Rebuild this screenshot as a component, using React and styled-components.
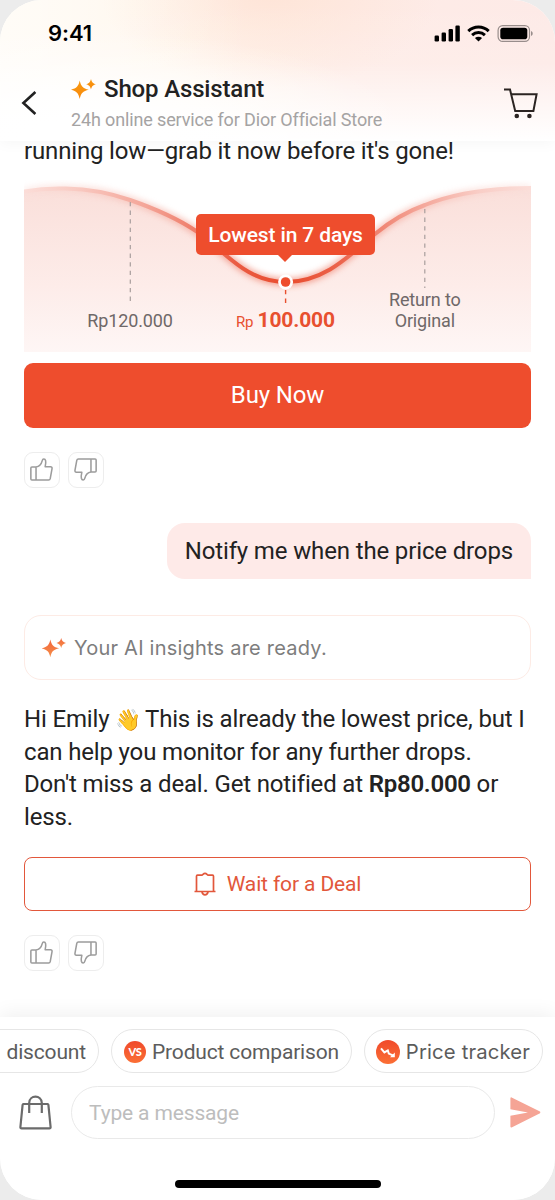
import React from "react";
import styled, { createGlobalStyle } from "styled-components";

const GlobalStyle = createGlobalStyle`
    * {
        box-sizing: border-box;
    }

    body {
        margin: 0;
        background: #ececec;
        font-family: Roboto, "Liberation Sans", sans-serif;
        color: #222;
    }

    svg {
        display: block;
        flex-shrink: 0;
    }
`

const Phone = styled.div`
    width: 555px;
    height: 1200px;
    display: flex;
    flex-direction: column;
    background: #fff;
    border-radius: 42px;
    overflow: hidden;
`

const Header = styled.header`
    height: 141px;
    flex-shrink: 0;
    position: relative;
    z-index: 2;
    background:
        radial-gradient(ellipse 330px 110px at 90px 141px, #fff 20%, rgba(255, 255, 255, 0) 100%),
        linear-gradient(180deg, rgba(255, 255, 255, 0) 0%, rgba(255, 255, 255, 0.1) 45%, #fff 100%),
        linear-gradient(90deg, rgba(255, 255, 255, 0.5) 0%, rgba(255, 255, 255, 0) 45%),
        radial-gradient(ellipse 170px 100px at 270px -10px, #fee4d7 0%, rgba(254, 228, 215, 0) 100%),
        linear-gradient(90deg, #fffaf0 0%, #fff5ea 35%, #feece7 62%, #fdeae7 100%);
    box-shadow: 0 2px 14px rgba(0, 0, 0, 0.04);
`

const StatusBar = styled.div`
    height: 66px;
    padding: 0 21px 0 48px;
    display: flex;
    align-items: center;
    justify-content: space-between;
`

const Clock = styled.span`
    font-family: Inter, "Liberation Sans", sans-serif;
    font-size: 22px;
    font-weight: 600;
    line-height: 26px;
    letter-spacing: -0.1px;
    color: #000;
`

const StatusIcons = styled.div`
    display: flex;
    align-items: center;
    gap: 7px;
`

const TitleBar = styled.div`
    height: 74px;
    padding: 0 17px 0 20px;
    display: flex;
    align-items: center;
`

const TitleText = styled.div`
    flex: 1;
    margin-left: 33px;
    padding-bottom: 2px;
`

const Title = styled.h1`
    margin: 0;
    display: flex;
    align-items: center;
    gap: 8px;
    font-size: 24px;
    font-weight: 500;
    line-height: 32px;
    letter-spacing: -0.15px;
`

const Subtitle = styled.p`
    margin: 4px 0 0;
    font-size: 18px;
    line-height: 22px;
    letter-spacing: -0.14px;
    color: #a5a3a3;
`

const Chat = styled.main`
    flex: 1;
    min-height: 0;
    margin-top: -6px;
    padding: 0 24px;
    display: flex;
    flex-direction: column;
`

const Message = styled.p`
    margin: 0;
    font-size: 24px;
    line-height: 32.6px;
    letter-spacing: -0.16px;
    white-space: nowrap;

    b {
        font-weight: 600;
        letter-spacing: -0.25px;
    }
`

const Emoji = styled.span`
    font-size: 21px;
    line-height: 1;
    letter-spacing: -1.5px;
`

const ChartBox = styled.div`
    position: relative;
    height: 172px;
    margin-top: 12px;
`

const Tooltip = styled.div`
    position: absolute;
    left: 172px;
    top: 34px;
    width: 179px;
    height: 41px;
    border-radius: 5px;
    background: #ee4d2d;
    color: #fff;
    font-size: 21px;
    font-weight: 500;
    line-height: 42px;
    letter-spacing: -0.13px;
    text-align: center;
    white-space: nowrap;

    &::after {
        content: "";
        position: absolute;
        left: 81px;
        top: 40px;
        border: 8px solid transparent;
        border-top-color: #ee4d2d;
        border-bottom: none;
    }
`

const ChartText = styled.text`
    font-family: Roboto, "Liberation Sans", sans-serif;
    font-size: ${({size}) => size || 18}px;
    font-weight: ${({weight}) => weight || 400};
    letter-spacing: -0.15px;
    fill: ${({accent}) => (accent ? '#e8502f' : '#6f6868')};
`

const BuyButton = styled.button`
    height: 65px;
    flex-shrink: 0;
    margin-top: 11px;
    border: none;
    border-radius: 9px;
    background: #ee4d2d;
    color: #fff;
    font-family: inherit;
    font-size: 24px;
    letter-spacing: -0.15px;
`

const Feedback = styled.div`
    display: flex;
    gap: 8px;
    margin-top: 24px;
`

const FeedbackButton = styled.button`
    width: 36px;
    height: 36px;
    padding: 0 1px 0 0;
    display: flex;
    align-items: center;
    justify-content: center;
    border: 1px solid #ededed;
    border-radius: 9px;
    background: #fff;
`

const UserBubble = styled.div`
    align-self: flex-end;
    height: 56px;
    margin-top: 35px;
    padding: 0 18px;
    border-radius: 18px 18px 0 18px;
    background: #feeae8;
    font-size: 24px;
    line-height: 56px;
    letter-spacing: -0.14px;
    white-space: nowrap;
`

const Insight = styled.div`
    height: 65px;
    flex-shrink: 0;
    margin: 36px 0 23.6px;
    padding: 1px 17px 0;
    display: flex;
    align-items: center;
    gap: 8px;
    border: 1.5px solid #fdebe5;
    border-radius: 17px;
    color: #7d7d7d;
    font-family: Inter, "Liberation Sans", sans-serif;
    font-size: 20px;
    letter-spacing: 0.22px;
`

const WaitButton = styled.button`
    height: 54px;
    flex-shrink: 0;
    margin-top: 23.4px;
    display: flex;
    align-items: center;
    justify-content: center;
    gap: 11px;
    border: 1.5px solid #e2573b;
    border-radius: 8px;
    background: #fff;
    color: #e2573b;
    font-family: inherit;
    font-size: 21px;
    letter-spacing: -0.13px;
`

const Dock = styled.footer`
    height: 183px;
    flex-shrink: 0;
    position: relative;
    background: #fff;
    box-shadow: 0 -4px 18px rgba(0, 0, 0, 0.06);
    display: flex;
    flex-direction: column;
    align-items: center;
`

const Chips = styled.div`
    width: 100%;
    margin-top: 12px;
    padding-right: 12px;
    display: flex;
    justify-content: flex-end;
    gap: 12px;
`

const Chip = styled.button`
    width: ${({width}) => width}px;
    height: 44px;
    padding: 1px 12px 0;
    flex-shrink: 0;
    display: flex;
    align-items: center;
    justify-content: flex-end;
    gap: 6px;
    border: 1px solid #e6e6e6;
    border-radius: 22px;
    background: #fff;
    color: #5c5c5c;
    font-family: ${({font}) => font || 'Roboto'}, "Liberation Sans", sans-serif;
    font-size: ${({size}) => size || 21}px;
    letter-spacing: ${({font}) => (font ? 0.14 : -0.16)}px;
    white-space: nowrap;
`

const VsBadge = styled.span`
    width: 22px;
    height: 22px;
    flex-shrink: 0;
    border-radius: 50%;
    background: linear-gradient(180deg, #f04a2b, #fb6f35);
    color: #fff;
    font-family: Lato, sans-serif;
    font-size: 11px;
    font-weight: 900;
    line-height: 22px;
    text-align: center;
`

const InputRow = styled.div`
    width: 100%;
    margin-top: 13px;
    padding: 0 14px 0 19px;
    display: flex;
    align-items: center;
`

const Input = styled.input`
    width: 424px;
    height: 53px;
    margin: 0 15px 0 19px;
    padding: 0 17px;
    border: 1.5px solid #e9e9e9;
    border-radius: 27px;
    background: #fff;
    outline: none;
    font-family: inherit;
    font-size: 21px;
    letter-spacing: -0.15px;

    &::placeholder {
        color: #bdbdbd;
        opacity: 1;
    }
`

const HomeIndicator = styled.div`
    width: 206px;
    height: 8px;
    margin-top: 41px;
    border-radius: 4px;
    background: #000;
`

const Sparkles = ({width, from, to}) => (
    <svg width={width} height={width * 0.8} viewBox="0 0 25 20">
        <defs>
            <linearGradient id={`spark-${width}`} x1="0" y1="0" x2="0" y2="1">
                <stop offset="0" stopColor={from}/>
                <stop offset="1" stopColor={to}/>
            </linearGradient>
        </defs>
        <path fill={`url(#spark-${width})`} d="M8.7 1.6 C10 7.4 11.8 9.4 17.8 10.8 C11.8 12.2 10 14.2 8.7 20 C7.4 14.2 5.6 12.2 -.2 10.8 C5.6 9.4 7.4 7.4 8.7 1.6Z"/>
        <path fill={`url(#spark-${width})`} d="M20 0 C20.8 3.2 21.8 4.4 25 5.2 C21.8 6 20.8 7.2 20 10.4 C19.2 7.2 18.2 6 15 5.2 C18.2 4.4 19.2 3.2 20 0Z"/>
    </svg>
)

const ThumbUp = ({down}) => (
    <svg width="23" height="23" viewBox="0 0 24 24" fill="none" stroke="#9c9c9c" strokeWidth="1.6" strokeLinejoin="round" transform={down ? 'rotate(180)' : undefined}>
        <path d="M6.3 9.3 H2 Q.9 9.3 .9 10.4 V21.8 Q.9 22.9 2 22.9 H19.4 Q20.8 22.9 21.1 21.6 L23 11 Q23.2 9.2 21.5 9.2 H15.8 C16.4 6.6 16.7 4.6 16.3 2.9 C15.7 .6 13.2 .6 12.8 2.7 C12 5.8 9.8 8.9 6.3 9.3 V22.9"/>
    </svg>
)

const PriceChart = () => (
    <svg width="507" height="172" viewBox="24 180 507 172">
        <defs>
            <linearGradient id="area" x1="0" y1="186" x2="0" y2="352" gradientUnits="userSpaceOnUse">
                <stop offset="0" stopColor="#fadfda"/>
                <stop offset="0.6" stopColor="#fdece9"/>
                <stop offset="1" stopColor="#fef6f5"/>
            </linearGradient>
            <linearGradient id="line" x1="24" y1="0" x2="531" y2="0" gradientUnits="userSpaceOnUse">
                <stop offset="0" stopColor="#fbddd8"/>
                <stop offset="0.1" stopColor="#f9cbc3"/>
                <stop offset="0.24" stopColor="#f4a598"/>
                <stop offset="0.42" stopColor="#ea5b42"/>
                <stop offset="0.52" stopColor="#e94c2e"/>
                <stop offset="0.62" stopColor="#eb634b"/>
                <stop offset="0.78" stopColor="#f4a598"/>
                <stop offset="0.9" stopColor="#f9cec7"/>
                <stop offset="1" stopColor="#fbddd8"/>
            </linearGradient>
            <filter id="glow" x="-5%" y="-20%" width="110%" height="140%">
                <feGaussianBlur stdDeviation="3"/>
            </filter>
        </defs>
        <path fill="url(#area)" d="M24 191.5 C38 189 52 188 66 188.5 C90 189 110 193 130 200 C156 209 178 219 196 231 C225 251 245 282 286 282 C325 282 350 255 375 234 C392 220 408 211 425 205 C455 193 490 188 531 188 V352 H24Z"/>
        <g fill="none" stroke="url(#line)">
            <path strokeWidth="7" opacity="0.55" filter="url(#glow)" d="M24 191.5 C38 189 52 188 66 188.5 C90 189 110 193 130 200 C156 209 178 219 196 231 C225 251 245 282 286 282 C325 282 350 255 375 234 C392 220 408 211 425 205 C455 193 490 188 531 188"/>
            <path strokeWidth="4" d="M24 191.5 C38 189 52 188 66 188.5 C90 189 110 193 130 200 C156 209 178 219 196 231 C225 251 245 282 286 282 C325 282 350 255 375 234 C392 220 408 211 425 205 C455 193 490 188 531 188"/>
        </g>
        <g strokeWidth="1.2" strokeDasharray="4.3 4.3" stroke="#a89e9d">
            <path d="M130.3 202 V305"/>
            <path d="M424.8 209 V288"/>
            <path stroke="#e8502f" strokeWidth="1.4" d="M285.6 290 V307"/>
        </g>
        <circle cx="285.6" cy="282" r="7.5" fill="#fff"/>
        <circle cx="285.6" cy="282" r="4.8" fill="#ee4d2d"/>
        <ChartText x="130" y="326.5" textAnchor="middle">Rp120.000</ChartText>
        <ChartText x="236" y="326.5" size="15" accent="true">Rp</ChartText>
        <ChartText x="257.5" y="326.5" size="21" weight="700" accent="true">100.000</ChartText>
        <ChartText x="424.8" y="305.5" textAnchor="middle">Return to</ChartText>
        <ChartText x="424.8" y="326.5" textAnchor="middle">Original</ChartText>
    </svg>
)

const App = () => {
    return (
        <React.Fragment>
            <GlobalStyle/>
            <Phone>
                <Header>
                    <StatusBar>
                        <Clock>9:41</Clock>
                        <StatusIcons>
                            <svg width="26" height="17" viewBox="0 0 26 17">
                                <rect x="0.6" y="10.5" width="4.4" height="6" rx="1.2"/>
                                <rect x="7.6" y="7.5" width="4.4" height="9" rx="1.2"/>
                                <rect x="14.6" y="4" width="4.4" height="12.5" rx="1.2"/>
                                <rect x="21.4" y="0.5" width="4.4" height="16" rx="1.2"/>
                            </svg>
                            <svg width="23" height="17" viewBox="0 0 23 17">
                                <path fill="none" stroke="#000" strokeWidth="3" d="M1.3 6.1 C7 .6 16 .6 21.7 6.1 M5.1 10.1 C8.7 6.7 14.3 6.7 17.9 10.1"/>
                                <path d="M7.9 12.9 C10 11.2 13 11.2 15.1 12.9 L11.5 16.6Z"/>
                            </svg>
                            <svg width="37" height="17" viewBox="0 0 37 17">
                                <rect x="1.1" y="0.6" width="31.4" height="15.8" rx="4.6" fill="none" stroke="#000" strokeOpacity="0.4" strokeWidth="1.2"/>
                                <rect x="3.3" y="2.8" width="27" height="11.4" rx="2.8"/>
                                <path fill="#000" fillOpacity="0.4" d="M34 6 C36.3 7 36.3 10 34 11Z"/>
                            </svg>
                        </StatusIcons>
                    </StatusBar>
                    <TitleBar>
                        <svg width="18" height="28" viewBox="0 0 18 28" fill="none" stroke="#222" strokeWidth="2.6">
                            <path d="M15.4 3 L3.4 14 L15.4 25"/>
                        </svg>
                        <TitleText>
                            <Title>
                                <Sparkles width={25} from="#f8980f" to="#f98a0c"/>
                                Shop Assistant
                            </Title>
                            <Subtitle>24h online service for Dior Official Store</Subtitle>
                        </TitleText>
                        <svg width="34" height="32" viewBox="0 0 34 32" fill="none" stroke="#2b2422" strokeWidth="2">
                            <path d="M0 2.4 H6 L11.2 24 H29.4 L32.6 7.2 H7.2"/>
                            <circle cx="12.8" cy="29" r="2.3" fill="#2b2422" stroke="none"/>
                            <circle cx="25.4" cy="29" r="2.3" fill="#2b2422" stroke="none"/>
                        </svg>
                    </TitleBar>
                </Header>

                <Chat>
                    <Message>running low—grab it now before it's gone!</Message>
                    <ChartBox>
                        <PriceChart/>
                        <Tooltip>Lowest in 7 days</Tooltip>
                    </ChartBox>
                    <BuyButton>Buy Now</BuyButton>
                    <Feedback>
                        <FeedbackButton><ThumbUp/></FeedbackButton>
                        <FeedbackButton><ThumbUp down/></FeedbackButton>
                    </Feedback>
                    <UserBubble>Notify me when the price drops</UserBubble>
                    <Insight>
                        <Sparkles width={24} from="#f2653a" to="#f58f4a"/>
                        Your AI insights are ready.
                    </Insight>
                    <Message>
                        Hi Emily <Emoji>👋</Emoji> This is already the lowest price, but I<br/>
                        can help you monitor for any further drops.<br/>
                        Don't miss a deal. Get notified at <b>Rp80.000</b> or<br/>
                        less.
                    </Message>
                    <WaitButton>
                        <svg width="22" height="24" viewBox="0 0 22 24" fill="none" stroke="#e2573b" strokeWidth="1.7" strokeLinejoin="round">
                            <path d="M.5 19.5 H21.5 M2.5 19.5 V4.2 Q2.5 3.2 3.5 3.2 H7.6 Q8.5 3.2 9 2.4 Q11 .2 13 2.4 Q13.5 3.2 14.4 3.2 H18.5 Q19.5 3.2 19.5 4.2 V19.5 M8 20 Q8.6 22.8 11 22.8 Q13.4 22.8 14 20"/>
                        </svg>
                        Wait for a Deal
                    </WaitButton>
                    <Feedback>
                        <FeedbackButton><ThumbUp/></FeedbackButton>
                        <FeedbackButton><ThumbUp down/></FeedbackButton>
                    </Feedback>
                </Chat>

                <Dock>
                    <Chips>
                        <Chip width={140}>discount</Chip>
                        <Chip width={241}>
                            <VsBadge>VS</VsBadge>
                            Product comparison
                        </Chip>
                        <Chip width={179} font="Inter" size={20.3}>
                            <svg width="24" height="24" viewBox="0 0 24 24">
                                <defs>
                                    <linearGradient id="drop" x1="0" y1="0" x2="0" y2="1">
                                        <stop offset="0" stopColor="#f04a2b"/>
                                        <stop offset="1" stopColor="#fb6f35"/>
                                    </linearGradient>
                                </defs>
                                <circle cx="12" cy="12" r="12" fill="url(#drop)"/>
                                <path fill="none" stroke="#fff" strokeWidth="2" d="M5 8.4 L8.4 12.4 L11.8 10.4 L12.8 13.6 L17.4 15.6"/>
                                <path fill="#fff" d="M18.8 12.4 V17.2 H14Z"/>
                            </svg>
                            Price tracker
                        </Chip>
                    </Chips>
                    <InputRow>
                        <svg width="33" height="35" viewBox="0 0 33 35" fill="none" stroke="#6b6b6b" strokeWidth="2.2" strokeLinejoin="round">
                            <path d="M4.4 9 H28.6 Q29.3 9 29.4 9.8 L31.6 32 Q31.7 33.4 30.4 33.4 H2.6 Q1.3 33.4 1.4 32 L3.6 9.8 Q3.7 9 4.4 9Z"/>
                            <path d="M10.2 18 V8 C10.2 -.4 22.8 -.4 22.8 8 V18"/>
                        </svg>
                        <Input placeholder="Type a message"/>
                        <svg width="31" height="31" viewBox="0 0 31 31" fill="#f5a495">
                            <path d="M1.6 .4 L30 14.6 Q30.8 15.4 30 16.2 L1.6 30.4 Q.4 30.6 .4 29.4 V18.8 L18 15.4 L.4 12.2 V1.4 Q.4 .2 1.6 .4Z"/>
                        </svg>
                    </InputRow>
                    <HomeIndicator/>
                </Dock>
            </Phone>
        </React.Fragment>
    );
}

export default App;
